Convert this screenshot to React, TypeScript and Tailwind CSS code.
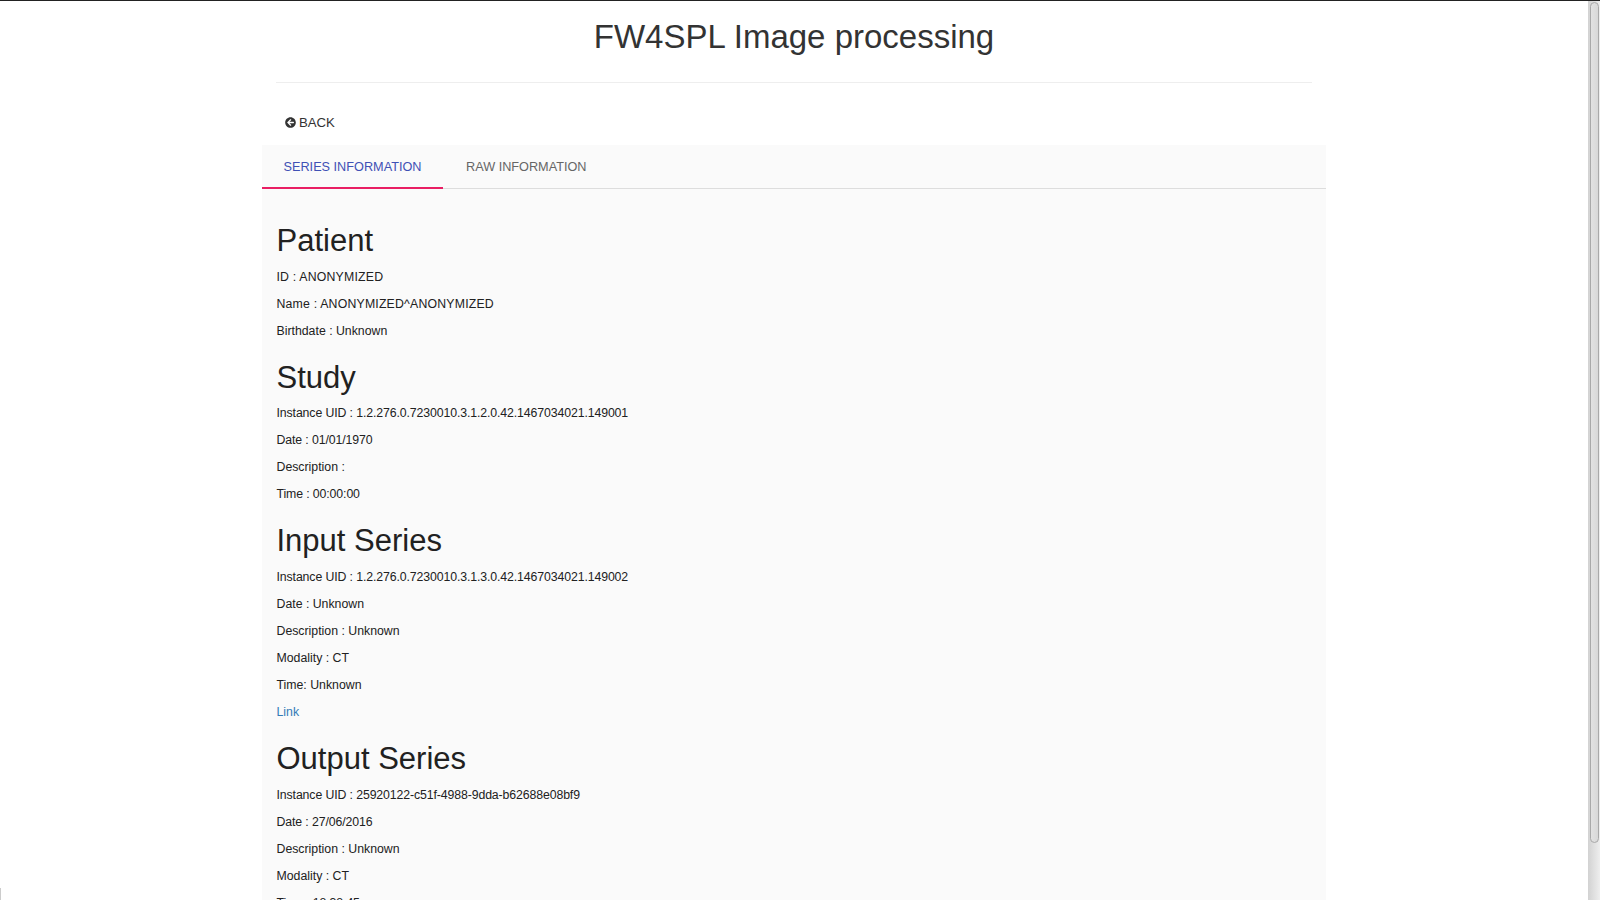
import { FaArrowCircleLeft } from "react-icons/fa"

const sections = [
  {
    title: "Patient",
    rows: ["ID : ANONYMIZED", "Name : ANONYMIZED^ANONYMIZED", "Birthdate : Unknown"],
  },
  {
    title: "Study",
    rows: [
      "Instance UID : 1.2.276.0.7230010.3.1.2.0.42.1467034021.149001",
      "Date : 01/01/1970",
      "Description :",
      "Time : 00:00:00",
    ],
  },
  {
    title: "Input Series",
    rows: [
      "Instance UID : 1.2.276.0.7230010.3.1.3.0.42.1467034021.149002",
      "Date : Unknown",
      "Description : Unknown",
      "Modality : CT",
      "Time: Unknown",
    ],
    link: true,
  },
  {
    title: "Output Series",
    rows: [
      "Instance UID : 25920122-c51f-4988-9dda-b62688e08bf9",
      "Date : 27/06/2016",
      "Description : Unknown",
      "Modality : CT",
      "Time : 18:38:45",
    ],
  },
]

// caps run a bit wider and digits a bit narrower than plain Liberation here
function rowTracking(row: string) {
  if (row.includes("ANONYMIZED")) return "tracking-[0.19px]"
  if (/\d{2}/.test(row)) return "tracking-[-0.11px]"
  return ""
}

export default function App() {
  return (
    <div className="relative h-[900px] overflow-hidden bg-white font-['Liberation_Sans',sans-serif] text-[12.3px] text-[#212121]">
      <div className="h-px bg-[#222]" />
      <div className="mr-3 flex flex-col items-center">
        <div className="w-[1064px]">
          <div className="mx-[14px] h-[82px] border-b border-[#eee] text-center">
            <h1 className="pt-[16px] text-[33px] leading-[40px] text-[#333]">FW4SPL Image processing</h1>
          </div>
          <div className="flex h-[62px] items-center pl-[23px] pt-[18px] text-[13.2px] text-[#333]">
            <FaArrowCircleLeft size={11} color="#333" className="mr-[3px] -mt-px" />
            BACK
          </div>
          <div className="bg-[#fafafa]">
            <div className="flex h-[44px] border-b border-[#ddd] text-[12.7px]">
              <div className="-mb-px flex h-[44px] w-[181px] items-center justify-center border-b-2 border-[#e91e63] pt-[3px] text-[#3f51b5]">
                SERIES INFORMATION
              </div>
              <div className="flex h-[43px] items-center pl-[23px] pt-[3px] text-[#666]">RAW INFORMATION</div>
            </div>
            <div className="px-[14.5px] pt-[30px]">
              {sections.map((section) => (
                <div key={section.title} className="mb-[7.8px]">
                  <h2 className="mb-[3.5px] text-[31px] leading-[44px] text-[#212121]">{section.title}</h2>
                  {section.rows.map((row) => (
                    <p key={row} className={`h-[27.1px] leading-[20px] ${rowTracking(row)}`}>
                      {row}
                    </p>
                  ))}
                  {section.link && <p className="h-[27.1px] leading-[20px] text-[#337ab7]">Link</p>}
                </div>
              ))}
            </div>
          </div>
        </div>
      </div>
      <div className="absolute bottom-0 right-0 top-px w-3 bg-gradient-to-r from-[#d2d2d2] to-[#eeeeee]">
        <div className="mx-auto mt-px h-[841px] w-[9px] rounded-[5px] border border-[#a9a9a9] bg-gradient-to-r from-[#e2e2e2] to-[#d8d8d8]" />
      </div>
      <div className="absolute bottom-0 left-0 h-3 w-px bg-[#cccccc]" />
    </div>
  )
}
